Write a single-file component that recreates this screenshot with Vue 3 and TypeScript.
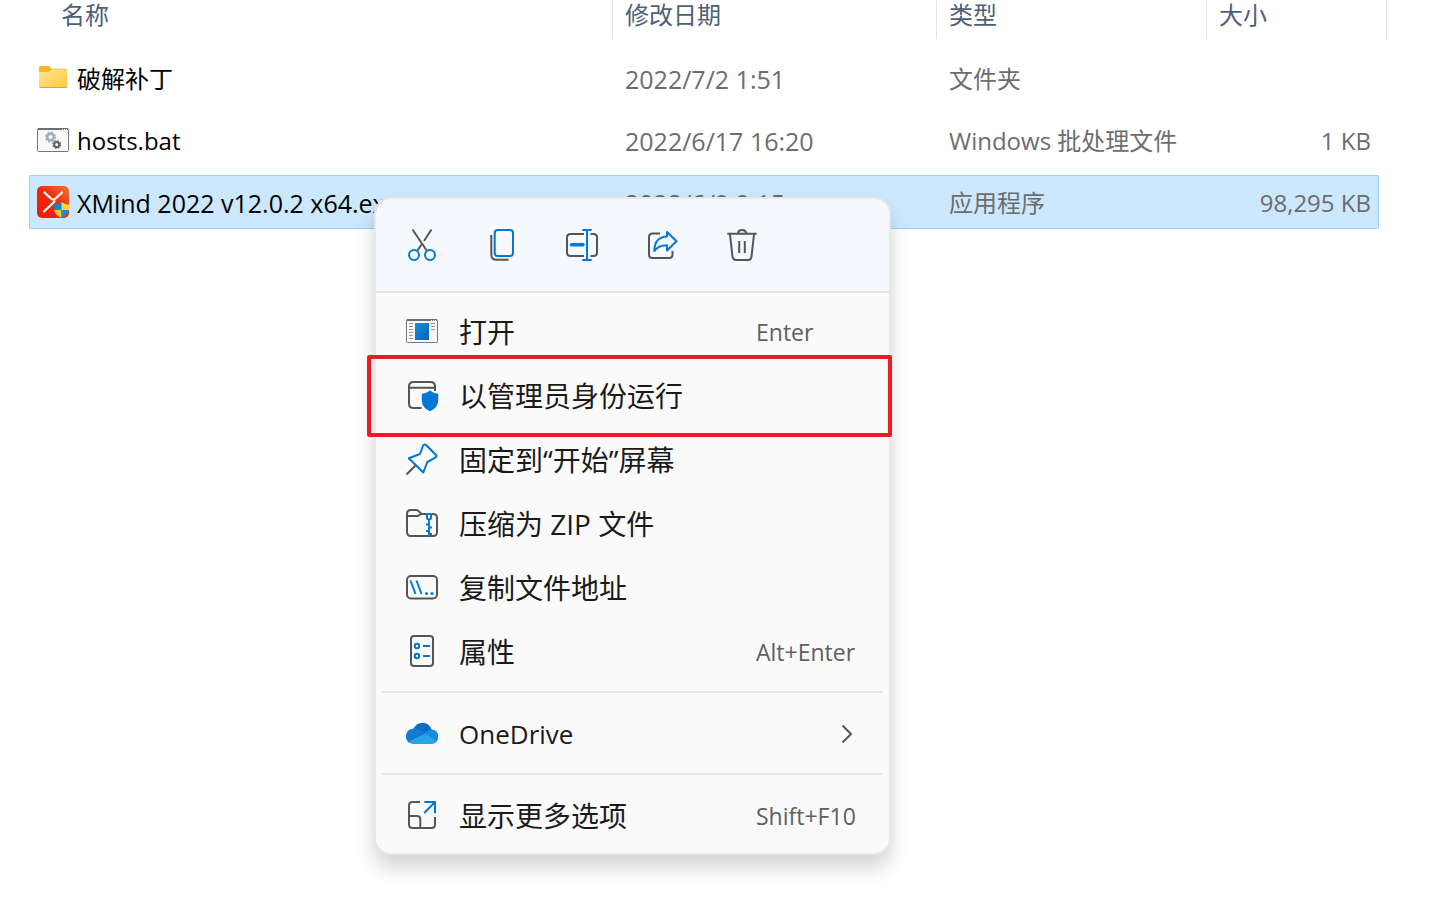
<script setup lang="ts">
interface FileRow {
  kind: 'folder' | 'batch' | 'app'
  name: string
  date: string
  type: string
  size: string
  selected?: boolean
}

interface MenuEntry {
  icon: string
  label: string
  shortcut?: string
  submenu?: boolean
  marked?: boolean
}

const files: FileRow[] = [
  { kind: 'folder', name: '破解补丁', date: '2022/7/2 1:51', type: '文件夹', size: '' },
  { kind: 'batch', name: 'hosts.bat', date: '2022/6/17 16:20', type: 'Windows 批处理文件', size: '1 KB' },
  { kind: 'app', name: 'XMind 2022 v12.0.2 x64.exe', date: '2022/6/9 9:15', type: '应用程序', size: '98,295 KB', selected: true },
]

const groups: MenuEntry[][] = [
  [
    { icon: 'open', label: '打开', shortcut: 'Enter' },
    { icon: 'admin', label: '以管理员身份运行', marked: true },
    { icon: 'pin', label: '固定到“开始”屏幕' },
    { icon: 'zip', label: '压缩为 ZIP 文件' },
    { icon: 'path', label: '复制文件地址' },
    { icon: 'props', label: '属性', shortcut: 'Alt+Enter' },
  ],
  [{ icon: 'cloud', label: 'OneDrive', submenu: true }],
  [{ icon: 'more', label: '显示更多选项', shortcut: 'Shift+F10' }],
]
</script>

<template>
  <main class="explorer">
    <table class="files">
      <colgroup>
        <col />
        <col class="col-date" />
        <col class="col-type" />
        <col class="col-size" />
      </colgroup>
      <thead>
        <tr>
          <th scope="col"><div class="head first">名称</div></th>
          <th scope="col"><div class="head">修改日期</div></th>
          <th scope="col"><div class="head">类型</div></th>
          <th scope="col"><div class="head">大小</div></th>
        </tr>
      </thead>
      <tbody>
        <tr v-for="file in files" :key="file.name" :class="{ selected: file.selected }">
          <td>
            <div class="cell name">
              <svg v-if="file.kind === 'folder'" class="icon" viewBox="0 0 32 32" aria-hidden="true">
                <defs>
                  <linearGradient id="fill-folder" x1="0" y1="0" x2="1" y2="1">
                    <stop offset="0" stop-color="#ffe69a" />
                    <stop offset="1" stop-color="#ffc938" />
                  </linearGradient>
                </defs>
                <path d="M2 5.500Q2 4 3.500 4H11q1 0 2 1l1.500 1.800H28.500Q30 7 30 8.500V20H2z" fill="#f8b81c" />
                <path d="M2 10H11q1.200 0 2-1l1.300-1.500H28.500Q30 7.500 30 9v15.500Q30 26 28.500 26h-25Q2 26 2 24.500z" fill="url(#fill-folder)" />
                <path d="M2.500 25.500h27" stroke="#e0a52c" fill="none" />
              </svg>
              <svg v-else-if="file.kind === 'batch'" class="icon" viewBox="0 0 32 32" aria-hidden="true">
                <rect x=".5" y="4.500" width="31" height="23" rx="1" fill="#f8f8f8" stroke="#77777a" />
                <path d="M1 5h30" stroke="#6e6e70" stroke-width="2" />
                <path d="M25 5.500h1m1 0h1m1 0h1" stroke="#fff" />
                <circle cx="13.500" cy="13" r="3.300" fill="none" stroke="#a5aeb7" stroke-width="2.400" />
                <circle cx="13.500" cy="13" r="4.800" fill="none" stroke="#a5aeb7" stroke-width="1.400" stroke-dasharray="2.300 1.470" />
                <circle cx="19.700" cy="20.500" r="2.500" fill="none" stroke="#59636b" stroke-width="2" />
                <circle cx="19.700" cy="20.500" r="3.800" fill="none" stroke="#59636b" stroke-width="1.200" stroke-dasharray="1.700 1.280" />
              </svg>
              <svg v-else class="icon" viewBox="0 0 32 32" aria-hidden="true">
                <defs>
                  <linearGradient id="fill-xmind" x1="1" y1="0" x2=".3" y2=".8">
                    <stop offset="0" stop-color="#ed7a35" />
                    <stop offset=".6" stop-color="#f02b0c" />
                    <stop offset="1" stop-color="#ee2003" />
                  </linearGradient>
                  <clipPath id="clip-shield">
                    <path d="M24.500 16q3.500 2.500 7.500 2.800v4.700q-.5 5.500-7.500 8.300-7-2.800-7.500-8.300v-4.700q4-.3 7.500-2.800z" />
                  </clipPath>
                </defs>
                <rect width="32" height="32" rx="5" fill="url(#fill-xmind)" />
                <path d="M7.500 6.500l6.500 6q2.300 2 4.600 0l6.400-6M17.500 15.500L7 25.500" fill="none" stroke="#fff" stroke-width="2.200" stroke-linecap="round" />
                <g clip-path="url(#clip-shield)">
                  <path d="M16 15h8.500v9H16z" fill="#0f86d2" />
                  <path d="M24.500 15H33v9h-8.500z" fill="#ffd633" />
                  <path d="M16 24h8.500v8H16z" fill="#fcc71e" />
                  <path d="M24.500 24H33v8h-8.500z" fill="#168cdd" />
                </g>
              </svg>
              <span :class="{ numeric: file.kind === 'app' }">{{ file.name }}</span>
            </div>
          </td>
          <td><div class="cell numeric">{{ file.date }}</div></td>
          <td><div class="cell">{{ file.type }}</div></td>
          <td><div class="cell size">{{ file.size }}</div></td>
        </tr>
      </tbody>
    </table>

    <div class="menu" role="menu">
      <div class="tools">
        <button type="button" aria-label="剪切">
          <svg class="icon" viewBox="0 0 32 32">
            <path class="g" d="M6.500.5L20.700 21.500M25.500.5L18 12M15.500 15.500L11.500 21.500" />
            <circle class="b" cx="8" cy="26" r="5" />
            <circle class="b" cx="24" cy="26" r="5" />
          </svg>
        </button>
        <button type="button" aria-label="复制">
          <svg class="icon" viewBox="0 0 32 32">
            <path class="g" d="M5.300 6v19.500q0 5.300 5.300 5.300H22.500" />
            <rect class="b" x="8.700" y="1" width="18.300" height="26" rx="3" />
          </svg>
        </button>
        <button type="button" aria-label="重命名">
          <svg class="icon" viewBox="0 0 32 32">
            <path class="g" d="M18 5H4.500Q1 5 1 8.500v15Q1 27 4.500 27H18M24.500 5h3Q31 5 31 8.500v15q0 3.500-3.500 3.500h-3" />
            <path class="b" d="M16.300 1h9.400M16.300 31h9.400M21 1v30" />
            <path d="M5.500 15.700H17" fill="none" stroke="#0078d4" stroke-width="3.600" stroke-linecap="round" />
          </svg>
        </button>
        <button type="button" aria-label="共享">
          <svg class="icon" viewBox="0 0 32 32">
            <path class="g" d="M14 4.500H6.500Q3 4.500 3 8v17.500Q3 29 6.500 29H23q3.500 0 3.500-3.500V22" />
            <path class="b" d="M21 3l9.500 9.300L21 21.500v-5.300Q12.500 16.200 8.300 22 8.500 8 21 7.500z" />
          </svg>
        </button>
        <button type="button" aria-label="删除">
          <svg class="icon" viewBox="0 0 32 32">
            <path class="g" d="M1.300 4.700h29.400M12 4.500Q12.300 1 16 1t4.300 3.500M4 5.500l2.500 22.200Q7 31 10 31h12.300q2.800 0 3.200-3.300L28 5.500M13.200 12v12M18.800 12v12" />
          </svg>
        </button>
      </div>

      <div class="entries">
        <div v-for="(group, index) in groups" :key="index" class="group" role="group">
          <button
            v-for="entry in group"
            :key="entry.icon"
            type="button"
            role="menuitem"
            class="entry"
            :class="{ marked: entry.marked, latin: entry.submenu }"
          >
            <svg v-if="entry.icon === 'open'" class="icon" viewBox="0 0 32 32" aria-hidden="true">
              <defs>
                <linearGradient id="fill-pane" x1="0" y1="0" x2="1" y2="1">
                  <stop offset="0" stop-color="#1490df" />
                  <stop offset="1" stop-color="#0862b5" />
                </linearGradient>
              </defs>
              <rect x=".5" y="3.500" width="31" height="23" rx="1" fill="#f8f8f8" stroke="#77777a" />
              <path d="M1 4h30" stroke="#707072" stroke-width="2" />
              <path d="M25 4.500h1m1 0h1m1 0h1" stroke="#fff" />
              <rect x="9" y="7" width="14" height="17" fill="url(#fill-pane)" />
              <path d="M3 7.500h4m-4 3h4m-4 3h4m-4 3h4m-4 3h4m-4 3h4M25 7.500h4m-4 3h4m-4 3h4" stroke="#98989a" fill="none" />
            </svg>
            <svg v-else-if="entry.icon === 'admin'" class="icon" viewBox="0 0 32 32" aria-hidden="true">
              <path class="g" d="M29 11V6.500Q29 2 24.500 2h-17Q3 2 3 6.500v17Q3 28 7.500 28H15.500M3 7.700h26" />
              <path d="M24 10.500q3.600 3 8.200 3.300v7q-.5 7.500-8.200 10.500-7.700-3-8.200-10.500v-7q4.600-.3 8.200-3.300z" fill="#0078d4" />
            </svg>
            <svg v-else-if="entry.icon === 'pin'" class="icon" viewBox="0 0 32 32" aria-hidden="true">
              <path class="g" d="M9.700 21.300L.5 30.500" />
              <path class="b" d="M17 1.500q1.500-2 3.300-.3l9.500 9.500q1.700 1.700-.5 3l-8 4.300-4 10.500L2.800 14.200l10.500-4q1-.5 1.300-1.500z" />
            </svg>
            <svg v-else-if="entry.icon === 'zip'" class="icon" viewBox="0 0 32 32" aria-hidden="true">
              <path class="g" d="M1 8V6Q1 2 5 2h5q2 0 3.200 1.800L15.500 6H27Q31 6 31 10v14Q31 28 27 28H5Q1 28 1 24V8h10q1.500 0 2.500-1l1.500-1.200" />
              <rect x="20" y="5" width="6" height="7" fill="#fafafa" />
              <path class="b" d="M21 6h4v3.500q0 2-2 2t-2-2zM23 12v17M23 16.500h-3M23 19.500h3M23 23h-3M23 26h3" />
            </svg>
            <svg v-else-if="entry.icon === 'path'" class="icon" viewBox="0 0 32 32" aria-hidden="true">
              <rect class="g" x="1" y="4" width="30" height="22.500" rx="4" />
              <path class="b" d="M4.500 8.500l5 13.500M10.500 8.500l5 13.500" />
              <circle cx="20.500" cy="21.500" r="1.500" fill="#0078d4" />
              <circle cx="26" cy="21.500" r="1.500" fill="#0078d4" />
            </svg>
            <svg v-else-if="entry.icon === 'props'" class="icon" viewBox="0 0 32 32" aria-hidden="true">
              <rect class="g" x="5" y="0" width="22" height="30" rx="3" />
              <circle class="b" cx="11" cy="10" r="2.200" />
              <circle class="b" cx="11" cy="20" r="2.200" />
              <path class="b" d="M17 10h7M17 20h7" />
            </svg>
            <svg v-else-if="entry.icon === 'cloud'" class="icon" viewBox="0 0 32 32" aria-hidden="true">
              <defs>
                <clipPath id="clip-cloud">
                  <path d="M7.500 25.700Q0 25.200 0 18q.5-6.300 7.500-7.300Q10.500 4.700 16.500 4.700q6.500 0 9 6.800 6.500.7 6.500 7.200-.5 6.500-6.500 7z" />
                </clipPath>
              </defs>
              <g clip-path="url(#clip-cloud)">
                <path d="M0 0h32v32H0z" fill="#0f6cc4" />
                <path d="M0 10.500q8-3 14 1.500l7 4L6 24H0z" fill="#1579d3" />
                <path d="M19.500 14.500l5-3.500H32v16L19 15z" fill="#168cdf" />
                <path d="M2 24L19.500 15.500 31 23.500V27H4z" fill="#27a5ea" />
              </g>
            </svg>
            <svg v-else class="icon" viewBox="0 0 32 32" aria-hidden="true">
              <path class="g" d="M14 2H6.500Q3 2 3 5.500v19Q3 28 6.500 28h19q3.500 0 3.500-3.500V17M3 16h8q3.300 0 3.300 3.300V28" />
              <path class="b" d="M18.300 2H29v11.300M29 2L18.300 13" />
            </svg>
            <span class="label">{{ entry.label }}</span>
            <span v-if="entry.shortcut" class="shortcut">{{ entry.shortcut }}</span>
            <svg v-if="entry.submenu" class="chevron" viewBox="0 0 12 20" aria-hidden="true">
              <path class="g" d="M1.500 1.500L10 10l-8.500 8.500" />
            </svg>
          </button>
        </div>
      </div>
    </div>
  </main>
</template>

<style>
body {
  background: #fff;
}
</style>

<style scoped>
.explorer {
  position: relative;
  box-sizing: border-box;
  min-height: 100vh;
  padding: 0 69px 0 29px;
  background: #fff;
  color: #000;
  font-family: "Open Sans", "Noto Sans CJK SC", sans-serif;
  font-size: 24px;
}

.icon {
  display: block;
  flex: none;
  width: 32px;
  height: 32px;
  overflow: visible;
}

.g,
.b {
  fill: none;
  stroke-width: 2;
  stroke-linejoin: round;
}

.g {
  stroke: #555;
}

.b {
  stroke: #0078d4;
}

.files {
  width: 100%;
  table-layout: fixed;
  border-collapse: separate;
  border-spacing: 0;
}

.col-date {
  width: 324px;
}

.col-type {
  width: 270px;
}

.col-size {
  width: 180px;
}

th {
  padding: 0 0 8px;
  font-weight: 400;
  text-align: left;
}

.head {
  box-sizing: border-box;
  height: 39px;
  padding-left: 12px;
  border-right: 1px solid #e5e5e5;
  color: #4c607a;
  line-height: 30px;
}

.head.first {
  padding-left: 32px;
}

td {
  padding: 4px 0;
}

.cell {
  display: flex;
  align-items: center;
  box-sizing: border-box;
  height: 54px;
  padding: 2px 0 0 12px;
  color: #6d6d6d;
  line-height: 32px;
  white-space: nowrap;
}

.cell.name {
  gap: 8px;
  padding: 0 0 0 8px;
  color: #000;
}

.name span {
  padding-top: 2px;
}

.numeric {
  font-size: 25px;
}

.cell.size {
  justify-content: flex-end;
  margin-right: 8px;
  padding: 2px 8px 0 0;
}

.selected .cell {
  border: solid #99d1ff;
  border-width: 1px 0;
  background: #cce8ff;
}

.selected .cell.name {
  padding-left: 7px;
  border-left-width: 1px;
  border-radius: 2px 0 0 2px;
}

.selected .cell.size {
  padding-right: 7px;
  border-right-width: 1px;
  border-radius: 0 2px 2px 0;
}

.menu {
  position: absolute;
  top: 197px;
  left: 374px;
  box-sizing: border-box;
  width: 517px;
  border: 2px solid #e6e9ec;
  border-radius: 17px;
  background: #fafafa;
  background-clip: padding-box;
  box-shadow: 0 14px 20px rgba(0, 0, 0, 0.15), 0 2px 12px rgba(0, 0, 0, 0.04);
}

button {
  margin: 0;
  padding: 0;
  border: 0;
  background: none;
  color: inherit;
  font: inherit;
}

.tools {
  display: flex;
  gap: 16px;
  padding: 14px;
  border-bottom: 2px solid #e2e7eb;
  border-radius: 15px 15px 0 0;
  background: #f5f9fd;
}

.tools button {
  display: grid;
  place-items: center;
  width: 64px;
  height: 64px;
}

.entries {
  padding: 7px 6px 5px;
}

.group + .group {
  margin-top: 7px;
  padding-top: 9px;
  border-top: 2px solid #e8e8e8;
}

.entry {
  position: relative;
  display: flex;
  align-items: center;
  gap: 21px;
  width: 100%;
  height: 64px;
  padding-left: 24px;
  color: #1a1a1a;
  font-size: 28px;
  line-height: 40px;
  text-align: left;
}

.entry.latin {
  font-size: 26px;
}

.label {
  flex: 1;
}

.shortcut {
  width: 127px;
  color: #606060;
  font-size: 23px;
}

.chevron {
  width: 12px;
  height: 20px;
  margin-right: 30px;
}

.marked::after {
  content: "";
  position: absolute;
  z-index: 1;
  inset: -9px -9px -9px -15px;
  border: 4px solid #ed1c24;
  border-radius: 2px;
}
</style>
